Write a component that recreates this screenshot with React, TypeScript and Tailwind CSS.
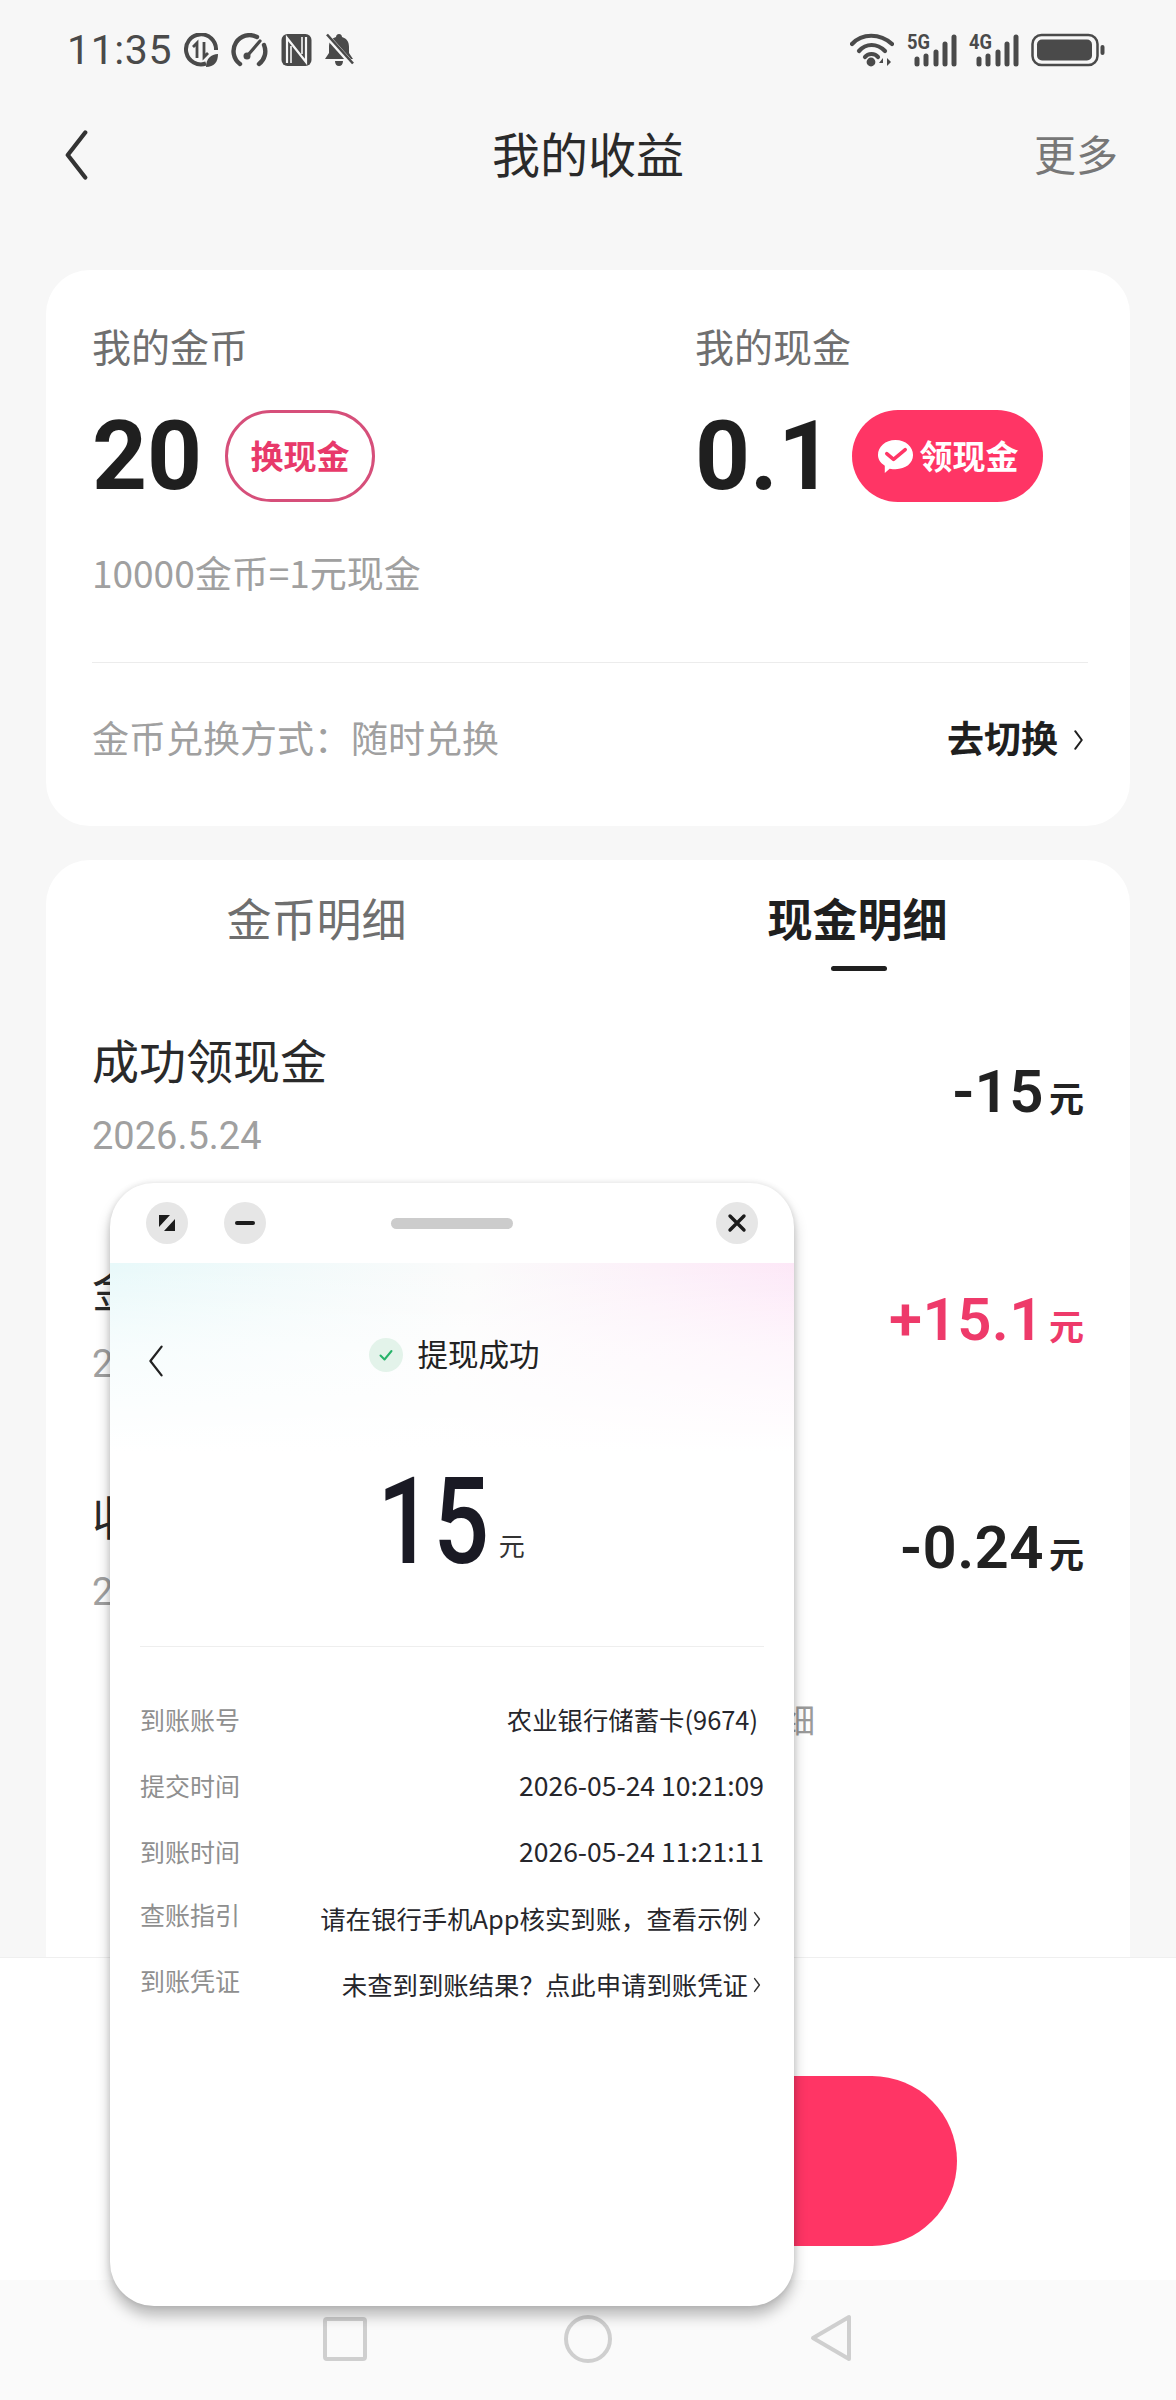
import React from "react";

const cjk = "font-['Noto_Sans_CJK_SC','Noto_Sans',sans-serif]";
const num = "font-['Roboto','Noto_Sans_CJK_SC',sans-serif]";

function Chevron({ className, w = 3 }: { className: string; w?: number }) {
  return (
    <svg viewBox="0 0 20 40" className={className} fill="none" stroke="currentColor" strokeWidth={w} strokeLinecap="round" strokeLinejoin="round">
      <path d="M17 2 L3 20 L17 38" />
    </svg>
  );
}

function SmallArrow({ className }: { className: string }) {
  return (
    <svg viewBox="0 0 10 20" className={className} fill="none" stroke="currentColor" strokeWidth={1.8} strokeLinecap="round" strokeLinejoin="round">
      <path d="M2 2 L8 10 L2 18" />
    </svg>
  );
}

function StatusLeft() {
  return (
    <div className="flex items-center">
      <span className="font-['Roboto',sans-serif] text-[41px] leading-none text-[#4a4a4a] w-[117px] ml-[67px] tracking-[0.6px]">11:35</span>
      <svg viewBox="0 0 34 34" className="w-[34px] h-[34px] text-[#4a4a4a]" fill="none" stroke="currentColor">
        <path d="M22 30.5 A15 15 0 1 1 32 17" strokeWidth="4" />
        <path d="M13 25 V10 L9 14 M20 9 V24 L24 20" strokeWidth="2.8" />
        <path d="M22 34 C22 26 27 21 34 21 C34 29 30 34 22 34Z" fill="currentColor" stroke="none" />
      </svg>
      <svg viewBox="0 0 38 34" className="w-[38px] h-[34px] ml-[13px] text-[#4a4a4a]" fill="none" stroke="currentColor" strokeWidth="4.4" strokeLinecap="round">
        <path d="M9 31 A16 16 0 0 1 26 4" />
        <path d="M33 12 A16 16 0 0 1 28 31" />
        <path d="M17 22 L29 8" strokeWidth="3.2" />
        <circle cx="16" cy="23" r="3.5" fill="currentColor" stroke="none" />
      </svg>
      <svg viewBox="0 0 31 34" className="w-[31px] h-[34px] ml-[12px] text-[#4a4a4a]">
        <rect x="0.5" y="1" width="30" height="32" rx="6" fill="currentColor" />
        <path d="M6 30 V5 L25 29 V4" fill="none" stroke="#f7f7f7" strokeWidth="2.2" />
        <path d="M10 30 V13 M21 21 V4" fill="none" stroke="#f7f7f7" strokeWidth="1.6" />
      </svg>
      <svg viewBox="0 0 30 34" className="w-[30px] h-[34px] ml-[12px] text-[#4a4a4a]">
        <path d="M15 1 C17 1 18 2.5 18 4 C23 5.5 25 9 25 14 V20 L29 26 H1 L5 20 V14 C5 9 7 5.5 12 4 C12 2.5 13 1 15 1Z M11 28 H19 C19 31 17.5 33 15 33 C12.5 33 11 31 11 28Z" fill="currentColor" />
        <path d="M3 3 L28 31" stroke="#f7f7f7" strokeWidth="5" />
        <path d="M3 1.5 L29 30.5" stroke="currentColor" strokeWidth="2.6" />
      </svg>
    </div>
  );
}

function Signal({ label }: { label: string }) {
  return (
    <svg viewBox="0 0 50 34" className="w-[50px] h-[34px] text-[#4a4a4a] overflow-visible">
      <text x="0" y="16" fontFamily="Roboto, sans-serif" fontWeight="700" fontSize="21" fill="currentColor" textLength="23" lengthAdjust="spacingAndGlyphs">{label}</text>
      <g stroke="currentColor" strokeWidth="5" strokeLinecap="round">
        <path d="M10 26 V31" />
        <path d="M19 23 V31" />
        <path d="M29 19 V31" />
        <path d="M38 11 V31" />
        <path d="M47 4 V31" />
      </g>
    </svg>
  );
}

function StatusRight() {
  return (
    <div className="flex items-center ml-auto mr-[71px]">
      <svg viewBox="0 0 44 34" className="w-[44px] h-[34px] text-[#4a4a4a]" fill="none" stroke="currentColor" strokeWidth="4.2" strokeLinecap="round">
        <path d="M2 11 C12 0 30 0 42 11" />
        <path d="M9 18 C16 10 27 10 35 18" />
        <path d="M15 24 C18 20 25 20 28 24" />
        <circle cx="21" cy="29" r="4.4" fill="currentColor" stroke="none" />
        <path d="M33 25 L29 30 H33 Z M37 25 V33 L41 29Z" fill="currentColor" stroke="none" />
      </svg>
      <div className="ml-[13px]"><Signal label="5G" /></div>
      <div className="ml-[12px]"><Signal label="4G" /></div>
      <svg viewBox="0 0 74 34" className="w-[74px] h-[34px] ml-[12px] text-[#4a4a4a]">
        <rect x="1.5" y="2" width="65" height="30" rx="9" fill="none" stroke="currentColor" strokeWidth="2.5" />
        <rect x="6" y="6.5" width="55" height="21" rx="5" fill="currentColor" />
        <rect x="69.5" y="12" width="4" height="10" rx="2" fill="currentColor" />
      </svg>
    </div>
  );
}

function TxRow({ title, date, amount, pink }: { title: string; date: string; amount: string; pink?: boolean }) {
  const color = pink ? "text-[#ee3a6a]" : "text-[#222222]";
  return (
    <div className="h-[228px] pl-[46px] pr-[46px] flex justify-between items-start">
      <div className="flex flex-col -mt-[3px]">
        <span className="text-[47px] leading-[60px] text-[#2a2a2a]">{title}</span>
        <span className={`${num} text-[38px] leading-[50px] mt-[22px] text-[#a0a0a0]`}>{date}</span>
      </div>
      <div className={`flex items-baseline mt-[25px] ${color}`}>
        <span className={`${num} text-[60px] leading-[70px] font-semibold tracking-[0.4px]`}>{amount}</span>
        <span className="text-[35px] font-bold ml-[5px] leading-[40px]">元</span>
      </div>
    </div>
  );
}

function DetailRow({ label, value, arrow, time, low }: { label: string; value: string; arrow?: boolean; time?: boolean; low?: boolean }) {
  const right = time ? "pr-[30px]" : arrow ? "pr-[33px]" : "pr-[36px]";
  return (
    <div className={`h-[66px] flex justify-between items-center pl-[30px] ${right}`}>
      <span className={`text-[25px] text-[#8f8f8f] leading-[36px] ${low ? "-mt-[6px]" : ""}`}>{label}</span>
      <span className={`flex items-center text-[#26262b] leading-[36px] ${time ? "text-[26.5px]" : "text-[25.4px]"} ${low ? "mt-[2px]" : ""}`}>
        {value}
        {arrow && <SmallArrow className="w-[8px] h-[18px] ml-[5px] mt-[2px] text-[#333]" />}
      </span>
    </div>
  );
}

export default function App() {
  return (
    <div className={`${cjk} relative w-[1176px] h-[2400px] bg-[#f7f7f7] overflow-hidden flex flex-col`}>
      <div className="h-[100px] flex items-center shrink-0">
        <StatusLeft />
        <StatusRight />
      </div>
      <div className="h-[110px] relative flex items-center justify-center shrink-0 pb-[6px]">
        <Chevron className="absolute left-[61px] top-[30px] w-[31px] h-[50px] text-[#333]" w={3.4} />
        <span className="text-[48px] leading-none text-[#2a2a2a]">我的收益</span>
        <span className="absolute right-[58px] top-[32px] text-[42px] leading-none text-[#777]">更多</span>
      </div>

      <div className="mt-[60px] mx-[46px] h-[556px] bg-white rounded-[44px] pl-[46px] pr-[42px] pt-[45px] shrink-0">
        <div className="flex h-[60px] items-center text-[39px] text-[#6f6f6f]">
          <span className="w-[603px]">我的金币</span>
          <span>我的现金</span>
        </div>
        <div className="flex mt-[35px] h-[92px] items-center">
          <div className="w-[603px] flex items-center">
            <span className={`${num} font-bold text-[96px] leading-none text-[#1f1f1f] w-[133px]`}>20</span>
            <span className="w-[150px] h-[92px] rounded-full border-[3px] border-[#d64f7a] flex items-center justify-center text-[33px] font-bold text-[#e8396a]">换现金</span>
          </div>
          <div className="flex items-center">
            <span className={`${num} font-bold text-[96px] leading-none text-[#1f1f1f] w-[157px]`}>0.1</span>
            <span className="w-[191px] h-[92px] rounded-full bg-[#ff3565] flex items-center justify-center text-[33px] font-bold text-white">
              <svg viewBox="0 0 38 38" className="w-[37px] h-[37px] mr-[6px]">
                <path d="M19 2 C29.5 2 37 9 37 17.5 C37 26 29.5 32 19 32 C17 32 15.5 32 13 31.5 L8 36 L8 28.5 C3.5 25.5 1 22 1 17.5 C1 9 8.5 2 19 2Z" fill="#fff" />
                <path d="M10 16 L17 22 L29 12" fill="none" stroke="#ff3565" strokeWidth="3.6" strokeLinecap="round" strokeLinejoin="round" />
              </svg>
              领现金
            </span>
          </div>
        </div>
        <div className="mt-[46px] h-[50px] flex items-center text-[37px] text-[#a0a0a0]">10000金币=1元现金</div>
        <div className="mt-[64px] h-[1px] bg-[#ececec]" />
        <div className="h-[150px] flex items-center justify-between">
          <span className="text-[37px] text-[#a0a0a0]">金币兑换方式：随时兑换</span>
          <span className="flex items-center text-[37px] font-bold text-[#1f1f1f]">
            去切换
            <SmallArrow className="w-[11px] h-[22px] ml-[15px] mt-[4px] mr-[4px]" />
          </span>
        </div>
      </div>

      <div className="mt-[34px] mx-[46px] flex-1 bg-white rounded-t-[44px] flex flex-col overflow-hidden">
        <div className="h-[112px] flex relative shrink-0">
          <div className="w-[541px] flex justify-center items-start pt-[28px] text-[45px] leading-[60px] text-[#6f6f6f]">金币明细</div>
          <div className="flex-1 flex justify-center items-start pt-[28px] text-[45px] leading-[60px] font-bold text-[#1f1f1f]"><span className="-ml-[2px]">现金明细</span></div>
          <div className="absolute left-[785px] top-[106px] w-[56px] h-[5px] bg-[#1f1f1f] rounded-full" />
        </div>
        <div className="pt-[60px]">
          <TxRow title="成功领现金" date="2026.5.24" amount="-15" />
          <TxRow title="金币兑换现金" date="2026.5.24" amount="+15.1" pink />
          <TxRow title="收益提现扣款" date="2026.5.24" amount="-0.24" />
        </div>
        <div className="flex justify-end pr-[315px] -mt-[17px] text-[33px] leading-[40px] text-[#9a9a9a]">仅展示近三个月收益明细</div>
      </div>

      <div className="h-[323px] bg-white border-t border-[#efefef] flex justify-center items-start pt-[118px] shrink-0">
        <div className="w-[738px] h-[170px] rounded-full bg-[#ff3565]" />
      </div>
      <div className="h-[120px] bg-[#fafafa] flex items-start justify-center gap-[197px] pt-[37px] shrink-0 text-[#cfcfcf]">
        <svg viewBox="0 0 44 44" className="w-[44px] h-[44px]"><rect x="2" y="2" width="40" height="40" rx="2" fill="none" stroke="currentColor" strokeWidth="4" /></svg>
        <svg viewBox="0 0 48 48" className="w-[48px] h-[48px] -mt-[2px]"><circle cx="24" cy="24" r="22" fill="none" stroke="currentColor" strokeWidth="4" /></svg>
        <svg viewBox="0 0 44 48" className="w-[44px] h-[48px] -mt-[3px]"><path d="M40 3 V45 L4 24Z" fill="none" stroke="currentColor" strokeWidth="4" strokeLinejoin="round" /></svg>
      </div>

      <div className="absolute left-[110px] top-[1183px] w-[684px] h-[1123px] bg-white rounded-[44px] shadow-[0_10px_14px_rgba(0,0,0,0.25),0_0_6px_rgba(0,0,0,0.12)] overflow-hidden flex flex-col">
        <div className="h-[80px] flex items-center relative shrink-0">
          <div className="absolute left-[36px] top-[19px] w-[42px] h-[42px] rounded-full bg-[#e6e6e6] flex items-center justify-center">
            <svg viewBox="0 0 20 20" className="w-[20px] h-[20px]">
              <path d="M2 2 H13 L2 14Z M18 18 H7 L18 6Z" fill="#1c1c1c" />
            </svg>
          </div>
          <div className="absolute left-[114px] top-[19px] w-[42px] h-[42px] rounded-full bg-[#e6e6e6] flex items-center justify-center">
            <div className="w-[20px] h-[4px] bg-[#1c1c1c] rounded-full" />
          </div>
          <div className="absolute left-[281px] top-[35px] w-[122px] h-[11px] rounded-full bg-[#cccccc]" />
          <div className="absolute left-[606px] top-[19px] w-[42px] h-[42px] rounded-full bg-[#e6e6e6] flex items-center justify-center">
            <svg viewBox="0 0 20 20" className="w-[20px] h-[20px]"><path d="M3 3 L17 17 M17 3 L3 17" stroke="#1c1c1c" strokeWidth="3.4" strokeLinecap="round" /></svg>
          </div>
        </div>
        <div className="h-[270px] shrink-0 relative bg-[linear-gradient(to_bottom,rgba(255,255,255,0)_0%,rgba(255,255,255,0.6)_30%,#ffffff_70%),linear-gradient(100deg,#e8f9fa_0%,#fbfbfb_50%,#fde5f7_100%)]">
          <div className="flex items-center h-[54px] mt-[63px] justify-center">
            <Chevron className="absolute left-[35px] top-[82px] w-[22px] h-[32px] text-[#222]" w={2.8} />
            <span className="w-[34px] h-[34px] rounded-full bg-[#e3f3ea] flex items-center justify-center mr-[15px] ml-[4px] mt-[4px]">
              <svg viewBox="0 0 16 16" className="w-[16px] h-[16px]"><path d="M2.5 8.5 L6.5 12.5 L13.5 4" fill="none" stroke="#27b36a" strokeWidth="2" strokeLinecap="round" strokeLinejoin="round" /></svg>
            </span>
            <span className="text-[30.5px] leading-none text-[#222]">提现成功</span>
          </div>
        </div>
        <div className="flex items-baseline justify-center -mt-[71px] h-[120px] shrink-0 pr-[14px]">
          <span className={`${num} inline-block text-[120px] leading-[120px] font-medium text-[#1a1a24] scale-x-[0.82]`}>15</span>
          <span className="text-[26px] leading-none text-[#333] -ml-[3px] -translate-y-[7px]">元</span>
        </div>
        <div className="mt-[64px] mx-[30px] h-[1px] bg-[#eeeeee] shrink-0" />
        <div className="pt-[39px]">
          <DetailRow label="到账账号" value="农业银行储蓄卡(9674)" />
          <DetailRow label="提交时间" value="2026-05-24 10:21:09" time />
          <DetailRow label="到账时间" value="2026-05-24 11:21:11" time />
          <DetailRow label="查账指引" value="请在银行手机App核实到账，查看示例" arrow low />
          <DetailRow label="到账凭证" value="未查到到账结果？点此申请到账凭证" arrow low />
        </div>
      </div>
    </div>
  );
}
